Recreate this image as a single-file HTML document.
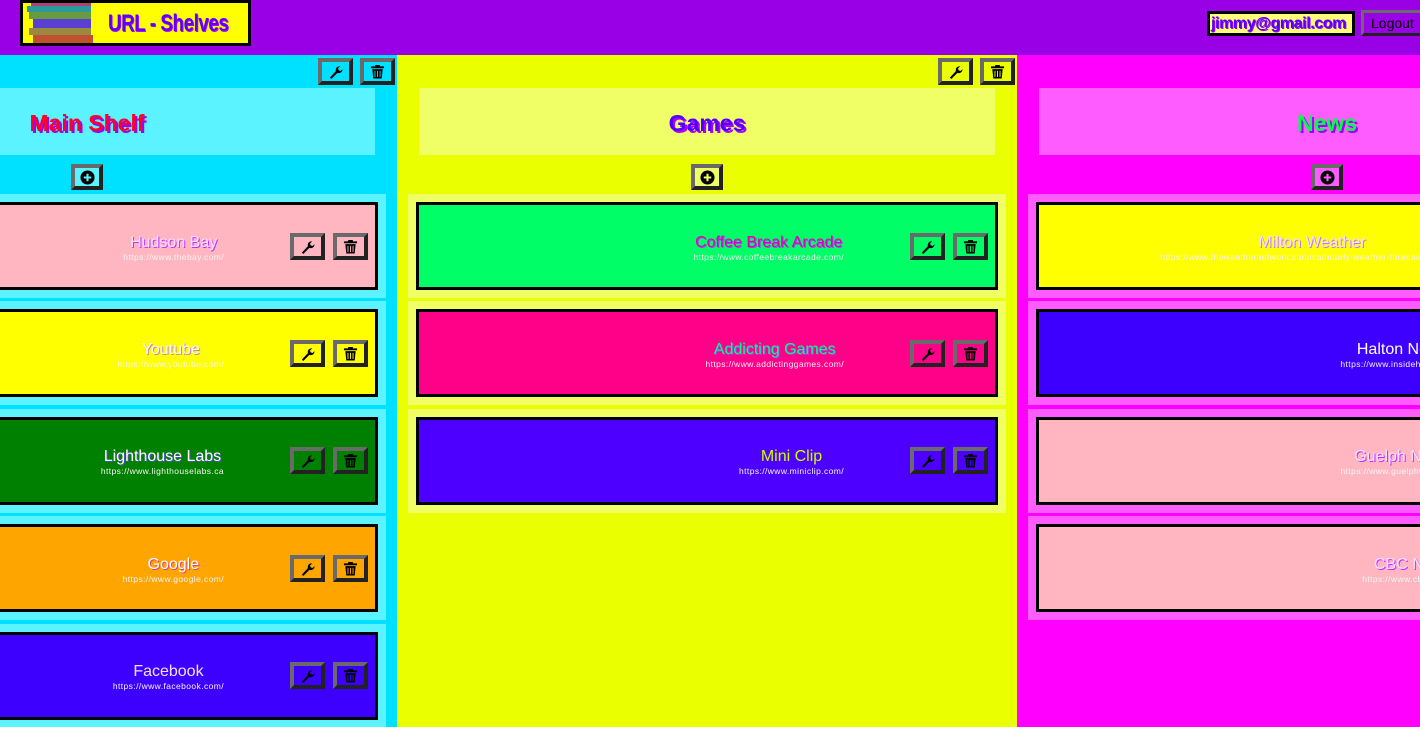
<!DOCTYPE html>
<html><head><meta charset="utf-8">
<style>
*{box-sizing:border-box;margin:0;padding:0}
html,body{width:1420px;height:735px;overflow:hidden;background:#fff;font-family:"Liberation Sans",sans-serif}
.hdr{position:absolute;left:0;top:0;width:1420px;height:55px;background:#9900e6}
.logo{position:absolute;left:20px;top:0;width:231px;height:46px;background:#ffff00;border:3px solid #000;overflow:hidden}
.logo .t{position:absolute;left:85px;top:8px;font-weight:bold;font-size:24px;line-height:26px;color:#5a00ff;text-shadow:1px 1px 0 #c000ff;white-space:nowrap;transform:scaleX(0.78);transform-origin:left top;letter-spacing:-0.5px}
.email{position:absolute;left:1207px;top:11px;width:148px;height:25px;background:#ffff77;border:3px solid #000;font-weight:bold;font-size:16px;color:#5500ff;text-shadow:1px 1px 0 #a000ff;line-height:19px;padding-left:1px;white-space:nowrap;overflow:hidden;letter-spacing:-0.4px}
.logout{position:absolute;left:1361px;top:10px;width:62px;height:26px;background:#9900e6;border:3px solid;border-color:#6a6a6a #222 #222 #6a6a6a;font-size:14px;line-height:20px;padding-left:7px;color:#000}
.wrap{position:absolute;left:0;top:55px;width:1420px;height:672px;overflow:hidden}
.cols{position:absolute;left:-223px;top:0;height:672px;display:flex}
.col{width:620px;height:672px;position:relative;flex:none}
.btn{position:absolute;width:35px;height:27px;border:4px solid;border-color:#6a6a6a #222 #222 #6a6a6a;display:flex;align-items:center;justify-content:center}
.title{position:absolute;left:22px;top:33px;width:576px;height:67px;display:flex;align-items:center;justify-content:center;padding-top:4px;font-weight:bold;font-size:23px;text-shadow:2px 2px 0 #9a00ff}
.add{left:294px;top:109px;width:32px;height:26px}
.list{position:absolute;left:11px;top:139px;width:598px}
.item{height:104px;padding:8px;margin-bottom:3.4px}
.card{height:88px;border:3px solid #000;display:flex;align-items:center;justify-content:flex-end;padding-right:7px}
.txt{text-align:center;margin-right:58px;margin-top:4px;white-space:nowrap}
.txt .n{font-size:16px;line-height:18px;color:#fff}
.txt .u{font-size:8.5px;line-height:11px;color:#f4f4f4;letter-spacing:0.4px}
.cb{position:relative;width:35px;height:27px;border:4px solid;border-color:#6a6a6a #222 #222 #6a6a6a;display:flex;align-items:center;justify-content:center;margin-left:8px;flex:none}
</style></head><body>
<div class="hdr">
 <div class="logo">
  <svg width="72" height="50" style="position:absolute;left:2px;top:-4px" viewBox="0 0 72 50">
   <rect x="6" y="0" width="60" height="7" fill="#b04070"/>
   <rect x="2" y="7" width="64" height="6" fill="#2a9a9a"/>
   <rect x="4" y="13" width="62" height="7" fill="#6a9a40"/>
   <rect x="8" y="20" width="58" height="9" fill="#5a40d0"/>
   <rect x="4" y="29" width="62" height="7" fill="#9a8a40"/>
   <rect x="8" y="36" width="60" height="10" fill="#c05030"/>
  </svg>
  <div class="t">URL - Shelves</div>
 </div>
 <div class="email">jimmy@gmail.com</div>
 <div class="logout">Logout</div>
</div>

<svg width="0" height="0" style="position:absolute">
 <defs>
  <symbol id="wr" viewBox="0 0 16 16"><path d="M2 14.5 L3.5 16 L10 9.5 C12 10.3 14.6 9.3 15.3 6.8 L15.6 5.5 L13.3 7.4 L11.2 6.6 L10.8 4.5 L13 2.6 C10 2.2 7.8 4.3 8.4 7.6 Z" fill="#000"/></symbol>
  <symbol id="tr" viewBox="0 0 16 16"><path d="M5.5 1h5v1.5H15v2H1v-2h4.5z M2.5 5.5h11l-1 10h-9z" fill="#000"/><rect x="4.8" y="7.3" width="1" height="6.5" fill="currentColor"/><rect x="7.5" y="7.3" width="1" height="6.5" fill="currentColor"/><rect x="10.2" y="7.3" width="1" height="6.5" fill="currentColor"/></symbol>
  <symbol id="pl" viewBox="0 0 16 16"><circle cx="8" cy="8" r="7.5" fill="#000"/><path d="M8 4v8M4 8h8" stroke="currentColor" stroke-width="2.2"/></symbol>
 </defs>
</svg>

<div class="wrap"><div class="cols">
 <div class="col" style="background:#00e0ff;color:#00e0ff">
  <div class="btn" style="left:541px;top:3px;background:#00e0ff"><svg width="15" height="15"><use href="#wr"/></svg></div>
  <div class="btn" style="left:583px;top:3px;background:#00e0ff;color:#00e0ff"><svg width="15" height="15"><use href="#tr"/></svg></div>
  <div class="title" style="background:#5af3ff;color:#ff0022">Main Shelf</div>
  <div class="btn add" style="background:#5af3ff;color:#5af3ff"><svg width="15" height="15"><use href="#pl"/></svg></div>
  <div class="list">
   <div class="item" style="background:#5af3ff"><div class="card" style="background:#ffb6c1;color:#ffb6c1"><div class="txt"><div class="n" style="color:#fbe0ff;text-shadow:1px 1px 0 #c030ff">Hudson Bay</div><div class="u">https://www.thebay.com/</div></div><div class="cb"><svg width="15" height="15"><use href="#wr"/></svg></div><div class="cb"><svg width="15" height="15"><use href="#tr"/></svg></div></div></div>
   <div class="item" style="background:#5af3ff"><div class="card" style="background:#ffff00;color:#ffff00"><div class="txt"><div class="n" style="text-shadow:1px 1px 0 #d080b0">Youtube</div><div class="u">https://www.youtube.com/</div></div><div class="cb"><svg width="15" height="15"><use href="#wr"/></svg></div><div class="cb"><svg width="15" height="15"><use href="#tr"/></svg></div></div></div>
   <div class="item" style="background:#5af3ff"><div class="card" style="background:#008000;color:#008000"><div class="txt"><div class="n" style="text-shadow:1px 1px 0 #5050c0">Lighthouse Labs</div><div class="u">https://www.lighthouselabs.ca</div></div><div class="cb"><svg width="15" height="15"><use href="#wr"/></svg></div><div class="cb"><svg width="15" height="15"><use href="#tr"/></svg></div></div></div>
   <div class="item" style="background:#5af3ff"><div class="card" style="background:#ffa500;color:#ffa500"><div class="txt"><div class="n" style="text-shadow:1px 1px 0 #e04080">Google</div><div class="u">https://www.google.com/</div></div><div class="cb"><svg width="15" height="15"><use href="#wr"/></svg></div><div class="cb"><svg width="15" height="15"><use href="#tr"/></svg></div></div></div>
   <div class="item" style="background:#5af3ff"><div class="card" style="background:#3d00ff;color:#3d00ff"><div class="txt"><div class="n" style="color:#f0e0ff">Facebook</div><div class="u">https://www.facebook.com/</div></div><div class="cb"><svg width="15" height="15"><use href="#wr"/></svg></div><div class="cb"><svg width="15" height="15"><use href="#tr"/></svg></div></div></div>
  </div>
 </div>
 <div class="col" style="background:#eaff00;color:#eaff00">
  <div class="btn" style="left:541px;top:3px;background:#eaff00"><svg width="15" height="15"><use href="#wr"/></svg></div>
  <div class="btn" style="left:583px;top:3px;background:#eaff00"><svg width="15" height="15"><use href="#tr"/></svg></div>
  <div class="title" style="background:#f0ff66;color:#5000ff;text-shadow:2px 2px 0 #b000ff">Games</div>
  <div class="btn add" style="background:#f0ff66;color:#f0ff66"><svg width="15" height="15"><use href="#pl"/></svg></div>
  <div class="list">
   <div class="item" style="background:#f0ff66"><div class="card" style="background:#00ff66;color:#00ff66"><div class="txt"><div class="n" style="color:#e000b0;text-shadow:1px 1px 0 #a040ff">Coffee Break Arcade</div><div class="u">https://www.coffeebreakarcade.com/</div></div><div class="cb"><svg width="15" height="15"><use href="#wr"/></svg></div><div class="cb"><svg width="15" height="15"><use href="#tr"/></svg></div></div></div>
   <div class="item" style="background:#f0ff66"><div class="card" style="background:#ff0088;color:#ff0088"><div class="txt"><div class="n" style="color:#00ff88;text-shadow:1px 1px 0 #a040ff">Addicting Games</div><div class="u">https://www.addictinggames.com/</div></div><div class="cb"><svg width="15" height="15"><use href="#wr"/></svg></div><div class="cb"><svg width="15" height="15"><use href="#tr"/></svg></div></div></div>
   <div class="item" style="background:#f0ff66"><div class="card" style="background:#4d00ff;color:#4d00ff"><div class="txt"><div class="n" style="color:#ccff00">Mini Clip</div><div class="u">https://www.miniclip.com/</div></div><div class="cb"><svg width="15" height="15"><use href="#wr"/></svg></div><div class="cb"><svg width="15" height="15"><use href="#tr"/></svg></div></div></div>
  </div>
 </div>
 <div class="col" style="background:#ff00ff;color:#ff00ff">
  <div class="btn" style="left:541px;top:3px;background:#ff00ff"><svg width="15" height="15"><use href="#wr"/></svg></div>
  <div class="btn" style="left:583px;top:3px;background:#ff00ff"><svg width="15" height="15"><use href="#tr"/></svg></div>
  <div class="title" style="background:#ff5cff;color:#00ff44">News</div>
  <div class="btn add" style="background:#ff5cff;color:#ff5cff"><svg width="15" height="15"><use href="#pl"/></svg></div>
  <div class="list">
   <div class="item" style="background:#ff5cff"><div class="card" style="background:#ffff00;color:#ffff00"><div class="txt"><div class="n" style="color:#f8e0ff;text-shadow:1px 1px 0 #c080d0">Milton Weather</div><div class="u">https://www.theweathernetwork.com/ca/hourly-weather-forecast/on/milton</div></div><div class="cb"><svg width="15" height="15"><use href="#wr"/></svg></div><div class="cb"><svg width="15" height="15"><use href="#tr"/></svg></div></div></div>
   <div class="item" style="background:#ff5cff"><div class="card" style="background:#3d00ff;color:#3d00ff"><div class="txt"><div class="n">Halton News</div><div class="u">https://www.insidehalton.com/</div></div><div class="cb"><svg width="15" height="15"><use href="#wr"/></svg></div><div class="cb"><svg width="15" height="15"><use href="#tr"/></svg></div></div></div>
   <div class="item" style="background:#ff5cff"><div class="card" style="background:#ffb6c1;color:#ffb6c1"><div class="txt"><div class="n" style="color:#fbe0ff;text-shadow:1px 1px 0 #c030ff">Guelph News</div><div class="u">https://www.guelphtoday.com/</div></div><div class="cb"><svg width="15" height="15"><use href="#wr"/></svg></div><div class="cb"><svg width="15" height="15"><use href="#tr"/></svg></div></div></div>
   <div class="item" style="background:#ff5cff"><div class="card" style="background:#ffb6c1;color:#ffb6c1"><div class="txt"><div class="n" style="color:#fbe0ff;text-shadow:1px 1px 0 #c030ff">CBC News</div><div class="u">https://www.cbc.ca/news</div></div><div class="cb"><svg width="15" height="15"><use href="#wr"/></svg></div><div class="cb"><svg width="15" height="15"><use href="#tr"/></svg></div></div></div>
  </div>
 </div>
</div></div>
</body></html>
